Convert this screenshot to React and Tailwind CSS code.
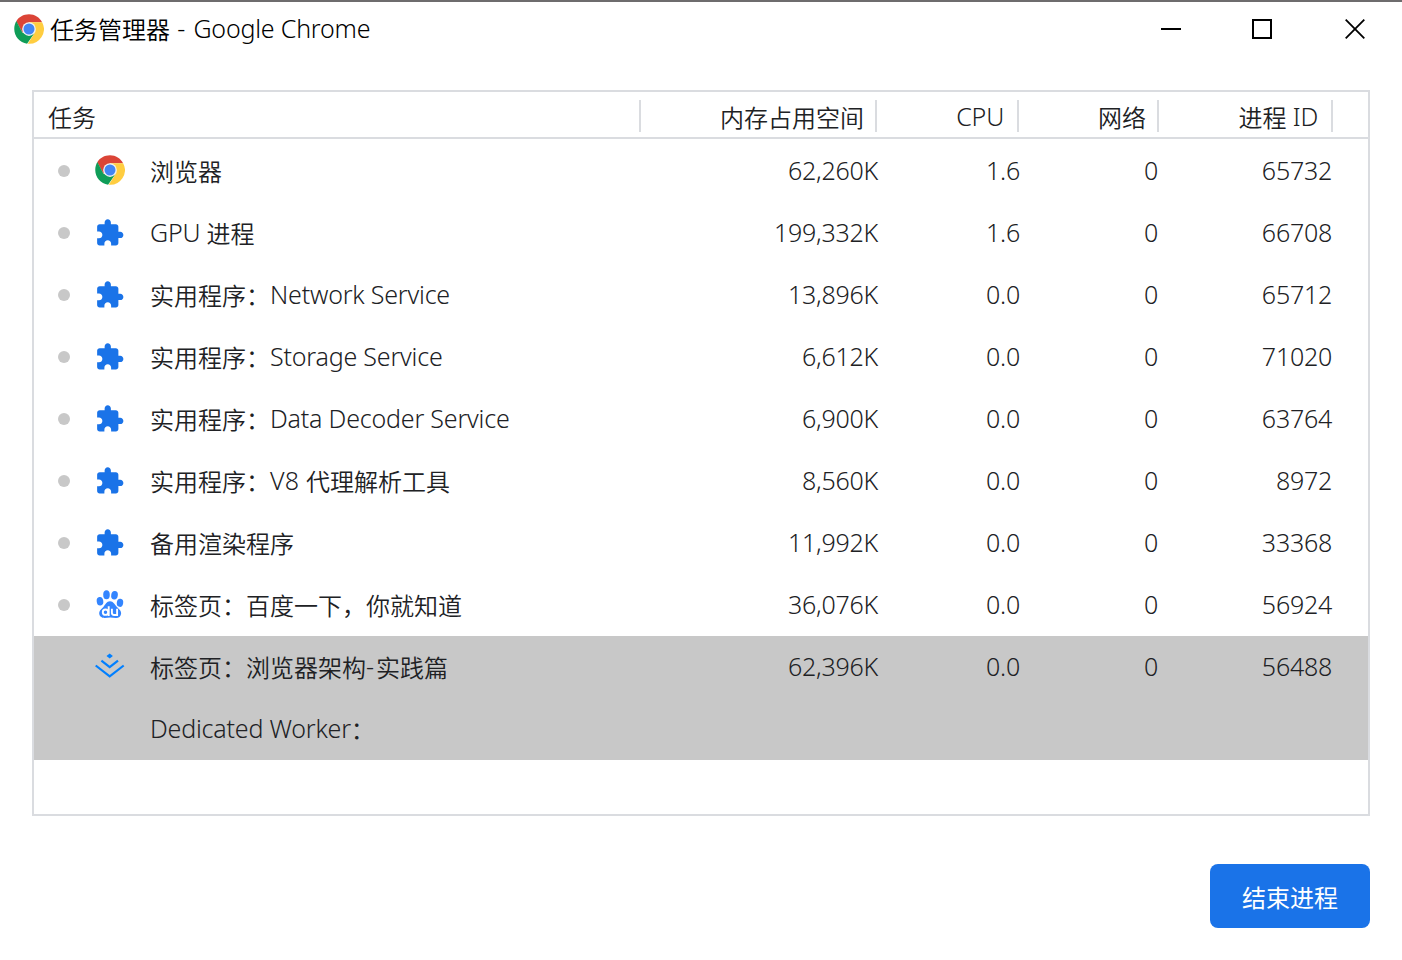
const tasks = [
  { icon: 'chrome', name: [['浏览器']], mem: '62,260K', cpu: '1.6', net: '0', pid: '65732' },
  { icon: 'ext', name: [['GPU ', 1], ['进程']], mem: '199,332K', cpu: '1.6', net: '0', pid: '66708' },
  { icon: 'ext', name: [['实用程序：'], ['Network Service', 1]], mem: '13,896K', cpu: '0.0', net: '0', pid: '65712' },
  { icon: 'ext', name: [['实用程序：'], ['Storage Service', 1]], mem: '6,612K', cpu: '0.0', net: '0', pid: '71020' },
  { icon: 'ext', name: [['实用程序：'], ['Data Decoder Service', 1]], mem: '6,900K', cpu: '0.0', net: '0', pid: '63764' },
  { icon: 'ext', name: [['实用程序：'], ['V8 ', 2], ['代理解析工具']], mem: '8,560K', cpu: '0.0', net: '0', pid: '8972' },
  { icon: 'ext', name: [['备用渲染程序']], mem: '11,992K', cpu: '0.0', net: '0', pid: '33368' },
  { icon: 'baidu', name: [['标签页：百度一下，你就知道']], mem: '36,076K', cpu: '0.0', net: '0', pid: '56924' },
  { icon: 'juejin', name: [['标签页：浏览器架构'], ['-', 3], ['实践篇']], mem: '62,396K', cpu: '0.0', net: '0', pid: '56488', selected: true },
  { name: [['Dedicated Worker', 1], ['：']], selected: true },
];

function ChromeIcon() {
  return (
    <svg className="size-[30px] shrink-0" viewBox="0 0 48 48">
      <path fill="#db4437" d="M24 .4C15.100.4 7.600 4.800 3.600 11.600L13.600 30L24 13H45C41 5.400 33.200.4 24 .4Z" />
      <path fill="#0f9d58" d="M3.800 11.300C1.600 15 .4 19.200.4 24c0 12 8.900 22 20.500 23.500L33.500 29.500 13.600 30Z" />
      <path fill="#ffcd40" d="M24 13H45A23.600 23.600 0 0 1 22 47.600L33.500 29.500Z" />
      <circle cx="24" cy="24" r="11" fill="#f1f1f1" />
      <circle cx="24" cy="24" r="8.800" fill="#4285f4" />
    </svg>
  );
}

function ExtensionIcon() {
  return (
    <svg className="size-[30px] shrink-0" viewBox="0.300 0 24 24" fill="#1a73e8">
      <path d="M20.500 11H19V7c0-1.100-.9-2-2-2h-4V3.500C13 2.120 11.880 1 10.500 1S8 2.120 8 3.500V5H4c-1.100 0-1.990.9-1.990 2v3.800H3.500c1.490 0 2.700 1.210 2.700 2.700s-1.210 2.700-2.700 2.700H2V20c0 1.100.9 2 2 2h3.800v-1.500c0-1.490 1.210-2.700 2.700-2.700 1.490 0 2.700 1.210 2.700 2.700V22H17c1.100 0 2-.9 2-2v-4h1.500c1.380 0 2.500-1.120 2.500-2.500S21.880 11 20.500 11z" />
    </svg>
  );
}

function BaiduIcon() {
  return (
    <svg className="size-[30px] shrink-0" viewBox="0 0 30 30" fill="#3385ff">
      <ellipse cx="5" cy="12.300" rx="3.300" ry="4.300" transform="rotate(-8 5 12.300)" />
      <ellipse cx="11.500" cy="5.700" rx="3.300" ry="4.500" />
      <ellipse cx="19.500" cy="6.200" rx="3.300" ry="4.300" transform="rotate(10 19.500 6.200)" />
      <ellipse cx="25" cy="13.800" rx="3.200" ry="4.100" transform="rotate(8 25 13.800)" />
      <path d="M15 12.300c3.400 0 4.700 3.200 6.700 5.400 2.200 2.300 4.800 3.900 4.400 7-.3 2.900-2.500 4.400-5.200 4.300-1.900-.1-3.800-.5-5.700-.5s-3.700.5-5.600.5c-2.700 0-5.200-1.400-5.400-4.400-.2-3 2.200-4.500 4.200-6.700 1.900-2.100 3.200-5.600 6.600-5.600z" />
      <g fill="none" stroke="#fff" strokeWidth="1.900">
        <circle cx="10.500" cy="23.200" r="2.700" />
        <path d="M13.700 17.300v9.600M16.900 19.800v4c0 1.600.8 2.200 2.200 2.200h3V19.800" />
      </g>
    </svg>
  );
}

function JuejinIcon() {
  return (
    <svg className="size-[30px] shrink-0" viewBox="0 0 30 30">
      <path fill="#007fff" d="M14.700 2.500l3.200 2.400-3.200 2.500-3.200-2.500z" />
      <path fill="none" stroke="#007fff" strokeWidth="2.200" d="M6.400 9.600l8.300 6.500 8.300-6.500M.7 14.500l14 10.900 14-10.900" />
    </svg>
  );
}

const icons = { chrome: ChromeIcon, ext: ExtensionIcon, baidu: BaiduIcon, juejin: JuejinIcon };
const iconBox = {
  chrome: 'mx-[25px] pb-[2px]',
  ext: 'mx-[25px]',
  baidu: 'mx-[25px] pb-[2px]',
  juejin: 'mx-[25px] pb-[2px]',
};

// Script styles: CJK, Latin, Latin with a wide gap, lone hyphen, title hyphen
const script = [
  'align-[-1px]',
  'text-[25px] tracking-[-0.200px]',
  'text-[25px] tracking-[0.200px]',
  'text-[25px] tracking-[2px]',
  'text-[25px] tracking-[0.800px]',
];

function Text({ parts }) {
  return (
    <span className="whitespace-pre">
      {parts.map(([text, kind], i) => (
        <span key={i} className={script[kind || 0]}>{text}</span>
      ))}
    </span>
  );
}

function Row({ task }) {
  const Icon = icons[task.icon];
  return (
    <div className={`grid h-[62px] grid-cols-[607px_237px_142px_138px_174px] items-center ${task.selected ? 'bg-[#c8c8c8]' : ''}`}>
      <div className="flex items-center pl-6">
        <span className={`size-3 shrink-0 rounded-full ${task.selected ? '' : 'bg-[#c8c8c8]'}`} />
        {Icon ? (
          <span className={iconBox[task.icon]}><Icon /></span>
        ) : (
          <span className="w-20" />
        )}
        <Text parts={task.name} />
      </div>
      {[task.mem, task.cpu, task.net, task.pid].map((v, i) => (
        <div key={i} className="pb-0.5 text-right text-[25px] tracking-[-0.250px]">{v}</div>
      ))}
    </div>
  );
}

function HeaderCell({ parts, className }) {
  return (
    <div className={`flex h-8 items-center border-r-2 border-[#dadce0] ${className}`}>
      <Text parts={parts} />
    </div>
  );
}

export default function App() {
  return (
    <div className="flex h-[960px] w-[1402px] flex-col overflow-hidden border-t-2 border-[#6e6c6d] bg-white font-['Noto_Sans','Noto_Sans_CJK_SC',sans-serif] text-[24px] font-[350] leading-8 text-[#202124]">
      <header className="flex h-[54px] shrink-0 items-center justify-between pl-3.5 pr-[37px] text-black">
        <div className="flex items-center gap-1.5">
          <ChromeIcon />
          <h1 className="font-[350]"><Text parts={[['任务管理器'], [' - ', 4], ['Google Chrome', 1]]} /></h1>
        </div>
        <div className="flex items-center">
          <svg className="mr-[71px] h-5 w-5" viewBox="0 0 20 20"><path d="M0 9h20v2H0z" /></svg>
          <svg className="mr-[73px] h-5 w-5" viewBox="0 0 20 20"><path d="M1 1h18v18H1z" fill="none" stroke="#000" strokeWidth="2" /></svg>
          <svg className="h-5 w-5" viewBox="0 0 20 20"><path d="M.7.700l18.600 18.600M19.300.7L.7 19.300" fill="none" stroke="#000" strokeWidth="1.800" /></svg>
        </div>
      </header>
      <main className="mx-8 mt-[34px] h-[726px] shrink-0 border-2 border-[#dadce0]">
        <div className="grid h-[47px] grid-cols-[607px_236px_142px_140px_174px] items-center border-b-2 border-[#dadce0] pt-[3px]">
          <HeaderCell className="pl-3.5 pt-0.5" parts={[['任务']]} />
          <HeaderCell className="justify-end pr-[11px] pt-0.5" parts={[['内存占用空间']]} />
          <HeaderCell className="justify-end pr-[13px]" parts={[['CPU', 1]]} />
          <HeaderCell className="justify-end pr-[11px] pt-0.5" parts={[['网络']]} />
          <HeaderCell className="justify-end pr-[13px] pt-0.5" parts={[['进程'], [' ID', 1]]} />
        </div>
        <div className="pt-px">
          {tasks.map((task, i) => <Row key={i} task={task} />)}
        </div>
      </main>
      <footer className="mt-12 flex justify-end pr-8">
        <button className="h-16 w-40 rounded-lg bg-[#1a73e8] pt-1 font-normal text-white">结束进程</button>
      </footer>
    </div>
  );
}
